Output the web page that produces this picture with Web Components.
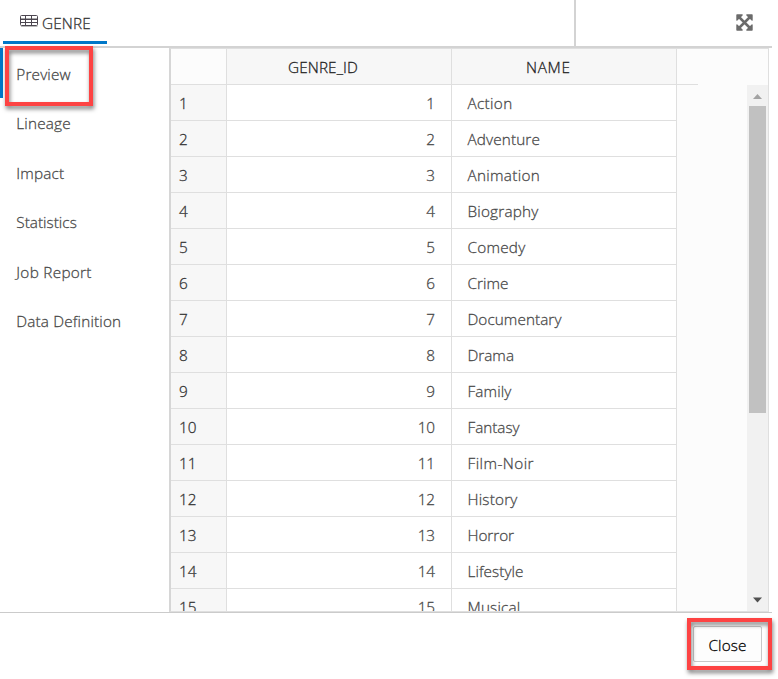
<!DOCTYPE html>
<html lang="en"><head><meta charset="utf-8"><title>GENRE</title>
<style>
html,body{margin:0;height:100%;overflow:hidden;background:#fff}
body{font-family:"Open Sans","Noto Sans",sans-serif;font-size:15.3px;font-weight:300;-webkit-text-stroke:.28px currentColor;color:#484848}
</style></head><body>
<entity-dialog></entity-dialog>
<script>
const attach=(el,html)=>{const r=el.attachShadow({mode:'open'});const t=document.createElement('template');t.innerHTML=html;r.append(t.content.cloneNode(true));return r};

/* Text run whose tracking is tuned to a given advance width. */
customElements.define('fit-text',class extends HTMLElement{
  connectedCallback(){
    if(this.shadowRoot)return;
    const r=attach(this,`<style>:host{display:inline-block;white-space:nowrap;line-height:24px}span{display:inline-block}</style><span></span>`);
    const s=r.querySelector('span');s.textContent=this.getAttribute('text');
    const w=+this.getAttribute('w');
    if(w){const n=s.textContent.length;s.style.letterSpacing=((w-s.getBoundingClientRect().width)/n)+'px'}
  }
});
customElements.define('table-icon',class extends HTMLElement{
  connectedCallback(){attach(this,`<style>:host{display:block;width:18px;height:12px}svg{display:block}</style>
  <svg width="18" height="12" viewBox="0 0 18 12" fill="none" stroke="#4c4650"><path d="M1 11.5H17.5" stroke="#bbb"/><path d="M1 3.5H17" stroke="#aaa"/><rect x=".5" y=".5" width="17" height="10" rx="1"/><path d="M1 4.5H17M1 7.5H17M5.5 1V10M11.5 1V10"/></svg>`)}
});
customElements.define('expand-icon',class extends HTMLElement{
  connectedCallback(){attach(this,`<style>:host{display:block;width:17px;height:17px}svg{display:block}</style>
  <svg width="17" height="17" viewBox="0 0 17 17" fill="#6b6b6b"><path d="M3 3L14 14M14 3L3 14" stroke="#6b6b6b" stroke-width="2.5"/><path d="M1 .3H6.3Q7.2.6 6.6 1.4L1.4 6.6Q.6 7.2.3 6.3V1Q.3.3 1 .3ZM16 .3H10.7Q9.8.6 10.4 1.4L15.6 6.6Q16.4 7.2 16.7 6.3V1Q16.7.3 16 .3ZM1 16.7H6.3Q7.2 16.4 6.6 15.6L1.4 10.4Q.6 9.8.3 10.7V16Q.3 16.7 1 16.7ZM16 16.7H10.7Q9.8 16.4 10.4 15.6L15.6 10.4Q16.4 9.8 16.7 10.7V16Q16.7 16.7 16 16.7Z"/></svg>`)}
});
customElements.define('tab-bar',class extends HTMLElement{
  connectedCallback(){attach(this,`<style>
  :host{display:flex;box-sizing:border-box;width:772px;height:48px;border-bottom:2px solid #d3d3d3;padding-left:3px}
  .tab{display:flex;box-sizing:border-box;width:104px;height:44px;border-bottom:3px solid #0077c8;background:#fff;padding:11px 0 0 17px;color:#333}
  table-icon{margin:4px 4px 0 0}
  .tools{display:flex;box-sizing:border-box;margin-left:auto;width:198px;border-left:2px solid #d3d3d3;padding:14px 0 0 160px}
  </style><div class="tab"><table-icon></table-icon><fit-text text="GENRE" w="49"></fit-text></div><div class="tools"><expand-icon></expand-icon></div>`)}
});
customElements.define('side-item',class extends HTMLElement{
  connectedCallback(){attach(this,`<style>
  :host{display:block;box-sizing:border-box;height:49.4px;padding:14px 0 0 16.300px;line-height:24px}
  :host([selected]){height:50px;margin-bottom:-.6px;border-left:3px solid #0077c8;padding-left:13.300px}
  </style><slot></slot>`)}
});
customElements.define('side-nav',class extends HTMLElement{
  connectedCallback(){
    const items=[['Preview',54.5],['Lineage',54.5],['Impact',48],['Statistics',60.5],['Job Report',75.5],['Data Definition',105]];
    attach(this,`<style>:host{display:block;width:169px;flex:none}</style>`+items.map(([t,w],i)=>`<side-item${i?'':' selected'}><fit-text text="${t}" w="${w}"></fit-text></side-item>`).join(''))}
});
customElements.define('scroll-track',class extends HTMLElement{
  connectedCallback(){attach(this,`<style>
  :host{display:flex;flex-direction:column;align-items:center;width:21px;background:#f1f1f1}
  svg{display:block;flex:none}.thumb{width:17px;height:307px;background:#c1c1c1}.gap{flex:1}
  </style><svg width="21" height="21"><path d="M6 14L10.5 9L15 14Z" fill="#a3a3a3"/></svg><div class="thumb"></div><div class="gap"></div><svg width="21" height="21"><path d="M6 7.500H15L10.500 12.500Z" fill="#505050"/></svg>`)}
});
customElements.define('data-row',class extends HTMLElement{
  connectedCallback(){
    const n=this.getAttribute('n'),v=this.getAttribute('name'),w=this.getAttribute('w'),nw=n.length*8.65;
    attach(this,`<style>
    :host{display:grid;grid-template-columns:56px 225px 225px;height:36px}
    div{box-sizing:border-box;border-right:1px solid #dfdfdf;border-bottom:1px solid #dfdfdf;padding-top:6px;background:#fff}
    .n{background:#f7f7f7;padding-left:8px;color:#333}.id{text-align:right;padding-right:16px}.v{padding-left:15.500px}
    </style><div class="n"><fit-text text="${n}" w="${nw}"></fit-text></div><div class="id"><fit-text text="${n}" w="${nw}"></fit-text></div><div class="v"><fit-text text="${v}" w="${w}"></fit-text></div>`)}
});
customElements.define('data-grid',class extends HTMLElement{
  connectedCallback(){
    const rows=[['Action',45],['Adventure',72.5],['Animation',72.5],['Biography',71],['Comedy',58],['Crime',41],['Documentary',94],['Drama',46.5],['Family',44],['Fantasy',52],['Film-Noir',66.5],['History',50],['Horror',46.5],['Lifestyle',56],['Musical',53]];
    attach(this,`<style>
    :host{display:flex;flex-direction:column;box-sizing:border-box;width:600px;height:564px;border:1px solid #dfdfdf;border-left:2px solid #d6d6d6;background:#fcfcfc;overflow:hidden}
    .head{display:grid;grid-template-columns:56px 225px 225px 21px;height:36px;flex:none;color:#222}
    .head div{box-sizing:border-box;border-right:1px solid #dfdfdf;border-bottom:1px solid #dfdfdf;background:#f7f7f7;padding-top:6px}
    .head .c{background:#fcfcfc}.head .g{padding-left:61px}.head .m{padding-left:74px}.head .e{border-right:0;background:#fcfcfc}
    .body{display:flex;flex:1;min-height:0}.rows{width:506px;overflow:hidden}scroll-track{margin-left:auto}
    </style><div class="head"><div class="c"></div><div class="g"><fit-text text="GENRE_ID" w="70"></fit-text></div><div class="m"><fit-text text="NAME" w="44.500"></fit-text></div><div class="e"></div></div>
    <div class="body"><div class="rows">${rows.map(([v,w],i)=>`<data-row n="${i+1}" name="${v}" w="${w}"></data-row>`).join('')}</div><scroll-track></scroll-track></div>`)}
});
customElements.define('push-button',class extends HTMLElement{
  connectedCallback(){attach(this,`<style>:host{display:block;box-sizing:border-box;width:69px;height:36px;border:1px solid #c8c8c8;border-radius:2px;background:#fdfdfd;padding:6px 0 0 14.500px;color:#000}</style><slot></slot>`)}
});
/* Red frame laid over a control to draw attention to it. */
customElements.define('call-out',class extends HTMLElement{
  connectedCallback(){attach(this,`<style>:host{display:block;position:absolute;box-sizing:border-box;border:4px solid #fd4343;filter:drop-shadow(1px 3px 2px rgba(0,0,0,.5));pointer-events:none}</style>`)}
});
customElements.define('entity-dialog',class extends HTMLElement{
  connectedCallback(){attach(this,`<style>
  :host{display:block;position:relative;width:778px;height:679px;overflow:hidden;background:#fff}
  .main{display:flex;width:772px;height:564px}
  .foot{display:flex;justify-content:flex-end;box-sizing:border-box;width:772px;height:67px;border-top:1px solid #cbcbcb;padding:13px 10px 0 0}
  .p{left:5px;top:46px;width:88px;height:60px}.q{left:687px;top:618px;width:85px;height:52px}
  </style><tab-bar></tab-bar><div class="main"><side-nav></side-nav><data-grid></data-grid></div>
  <div class="foot"><push-button><fit-text text="Close" w="38"></fit-text></push-button></div><call-out class="p"></call-out><call-out class="q"></call-out>`)}
});
</script></body></html>
